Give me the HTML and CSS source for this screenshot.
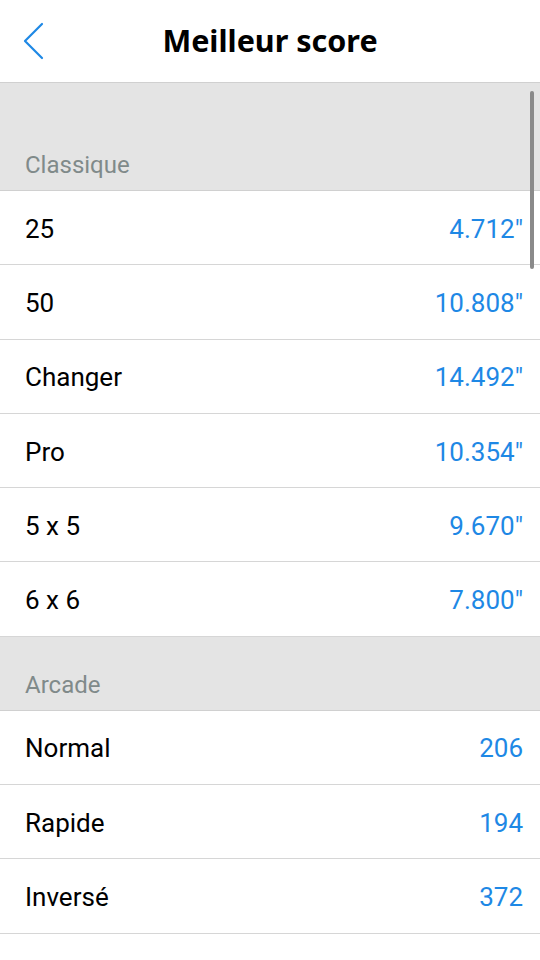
FILE: index.html
```html
<!DOCTYPE html>
<html lang="fr">
<head>
    <meta charset="UTF-8">
    <meta name="viewport" content="width=device-width, initial-scale=1.0">
    <title>Meilleur score</title>
    <link rel="stylesheet" href="styles.css">
</head>
<body>
    <div class="header">
        <a class="back" href="#">
            <svg width="22" height="38" viewBox="0 0 22 38">
                <path d="M19 2 L2 19 L19 36" fill="none" stroke="#1e88e5" stroke-width="2.2" stroke-linecap="round" stroke-linejoin="round"/>
            </svg>
        </a>
        <h1>Meilleur score</h1>
    </div>

    <div class="list">
        <div class="scrollbar"></div>
        <div class="section first">Classique</div>
        <div class="row"><span>25</span><span class="val">4.712"</span></div>
        <div class="row"><span>50</span><span class="val">10.808"</span></div>
        <div class="row"><span>Changer</span><span class="val">14.492"</span></div>
        <div class="row"><span>Pro</span><span class="val">10.354"</span></div>
        <div class="row"><span>5 x 5</span><span class="val">9.670"</span></div>
        <div class="row"><span>6 x 6</span><span class="val">7.800"</span></div>

        <div class="section">Arcade</div>
        <div class="row"><span>Normal</span><span class="val">206</span></div>
        <div class="row"><span>Rapide</span><span class="val">194</span></div>
        <div class="row"><span>Inversé</span><span class="val">372</span></div>
    </div>
</body>
</html>
```
FILE: styles.css
```css
body{
    margin: 0;
    background-color: #ffffff;
    font-family: Roboto, "Liberation Sans", sans-serif;
}
.header{
    height: 82px;
    border-bottom: 1px solid #d0d0d0;
    display: flex;
    align-items: center;
    justify-content: center;
    position: relative;
}
.back{
    position: absolute;
    left: 23px;
    top: 22px;
    display: block;
}
.header h1{
    margin: 0;
    font-family: "Noto Sans", sans-serif;
    font-weight: 700;
    font-size: 30.5px;
    color: #000;
    padding-bottom: 2px;
}
.list{
    position: relative;
}
.scrollbar{
    position: absolute;
    right: 6px;
    top: 8px;
    width: 4px;
    height: 178px;
    border-radius: 2px;
    background-color: #8a8a8a;
}
.section{
    height: 74px;
    background-color: #e4e4e4;
    border-bottom: 1px solid #d0d0d0;
    color: #808a8a;
    font-size: 24px;
    padding-left: 25px;
    box-sizing: border-box;
    display: flex;
    align-items: flex-end;
    padding-bottom: 11px;
}
.section.first{
    height: 108px;
}
.row{
    height: 74.3px;
    box-sizing: border-box;
    border-bottom: 1px solid #d6d6d6;
    display: flex;
    align-items: center;
    justify-content: space-between;
    padding: 2px 17px 0 25px;
    font-size: 26px;
    color: #000;
}
.val{
    color: #1e88e5;
}
```
